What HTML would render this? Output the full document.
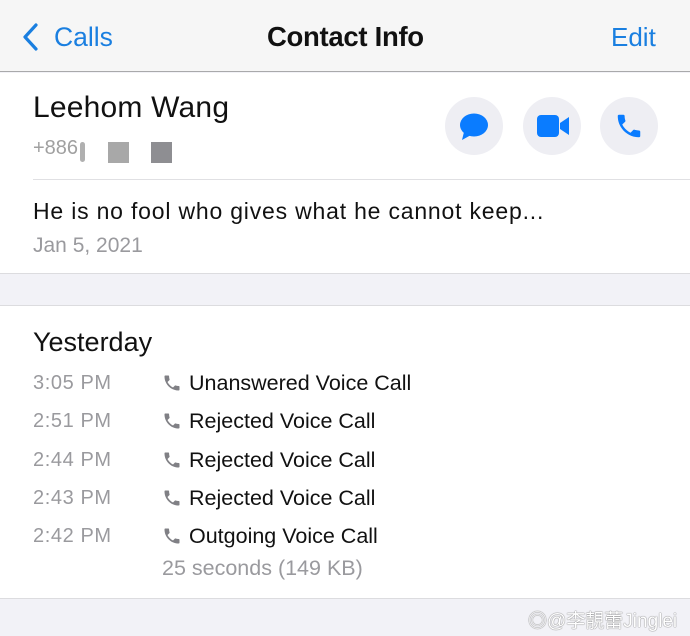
<!DOCTYPE html>
<html><head><meta charset="utf-8"><style>
*{margin:0;padding:0;box-sizing:border-box}
body{width:690px;height:636px;overflow:hidden;background:#f2f2f7;font-family:"Liberation Sans","Noto Sans CJK SC",sans-serif;position:relative}
.a{position:absolute;white-space:nowrap}
.nav{position:absolute;left:0;top:0;width:690px;height:72px;background:#f6f6f6;border-bottom:1.5px solid #a9a9ab}
.blue{color:#1a7fe0}
.w{position:absolute;left:0;width:690px;background:#fff}
.circ{position:absolute;top:97px;width:58px;height:58px;border-radius:50%;background:#eeeef3}
.t{left:33px;color:#9a9a9e;font-size:20px;letter-spacing:0.6px}
.c{left:189px;color:#111;font-size:21.5px}
.ph{left:162px}
</style></head><body>
<div class="nav"></div>
<svg class="a" style="left:20px;top:22px" width="20" height="30" viewBox="0 0 20 30"><path d="M16 3 L5 15 L16 27" fill="none" stroke="#1a7fe0" stroke-width="3.2" stroke-linecap="round" stroke-linejoin="round"/></svg>
<div class="a blue" style="left:54px;top:22px;font-size:26.5px">Calls</div>
<div class="a" style="left:267px;top:21px;font-size:27.5px;font-weight:bold;color:#111;letter-spacing:-0.3px">Contact Info</div>
<div class="a blue" style="left:611px;top:22px;font-size:26px">Edit</div>

<div class="w" style="top:73px;height:200px"></div>
<div class="a" style="left:33px;top:91px;font-size:30px;color:#111;letter-spacing:0.2px">Leehom Wang</div>
<div class="a" style="left:33px;top:137px;font-size:20px;color:#a0a0a0">+886</div>
<div class="a" style="left:80px;top:142px;width:5px;height:20px;background:#b0b0b0;border-radius:3px"></div>
<div class="a" style="left:108px;top:142px;width:21px;height:21px;background:#a8a8a8"></div>
<div class="a" style="left:151px;top:142px;width:21px;height:21px;background:#8e8e92"></div>
<div class="circ" style="left:445px"></div>
<div class="circ" style="left:523px"></div>
<div class="circ" style="left:600px"></div>
<svg class="a" style="left:458px;top:112px" width="32" height="30" viewBox="0 0 32 30"><ellipse cx="16" cy="13" rx="14" ry="11.5" fill="#0a7cff"/><path d="M6 20 L4 28 L13 23Z" fill="#0a7cff"/></svg>
<svg class="a" style="left:536px;top:114px" width="34" height="24" viewBox="0 0 34 24"><rect x="1" y="1" width="22" height="22" rx="4" fill="#0a7cff"/><path d="M24 9 L33 3 V21 L24 15Z" fill="#0a7cff"/></svg>
<svg class="a" style="left:614px;top:111px" width="30" height="30" viewBox="0 0 24 24"><path d="M6.6 10.8c1.4 2.8 3.8 5.1 6.6 6.6l2.2-2.2c.3-.3.7-.4 1-.2 1.1.4 2.3.6 3.6.6.6 0 1 .4 1 1V20c0 .6-.4 1-1 1C10.6 21 3 13.4 3 4c0-.6.4-1 1-1h3.5c.6 0 1 .4 1 1 0 1.3.2 2.5.6 3.6.1.3 0 .7-.2 1z" fill="#0a7cff"/></svg>
<div class="a" style="left:33px;top:179px;width:657px;height:1px;background:#e0e0e3"></div>
<div class="a" style="left:33px;top:198px;font-size:23px;color:#111;letter-spacing:0.8px">He is no fool who gives what he cannot keep...</div>
<div class="a" style="left:33px;top:234px;font-size:21px;color:#9a9a9e">Jan 5, 2021</div>
<div class="a" style="left:0;top:273px;width:690px;height:1px;background:#dcdcdf"></div>

<div class="w" style="top:305px;height:294px;border-top:1px solid #dcdcdf;border-bottom:1px solid #dcdcdf"></div>
<div class="a" style="left:33px;top:327px;font-size:27px;color:#111">Yesterday</div>

<div class="a t" style="top:372px">3:05 PM</div><div class="a c" style="top:371px">Unanswered Voice Call</div>
<div class="a t" style="top:410px">2:51 PM</div><div class="a c" style="top:409px">Rejected Voice Call</div>
<div class="a t" style="top:449px">2:44 PM</div><div class="a c" style="top:448px">Rejected Voice Call</div>
<div class="a t" style="top:487px">2:43 PM</div><div class="a c" style="top:486px">Rejected Voice Call</div>
<div class="a t" style="top:525px">2:42 PM</div><div class="a c" style="top:524px">Outgoing Voice Call</div>
<div class="a" style="left:162px;top:556px;font-size:21.5px;color:#9a9a9e">25 seconds (149 KB)</div>
<svg class="a ph" style="top:373px" width="20" height="20" viewBox="0 0 24 24"><path d="M6.6 10.8c1.4 2.8 3.8 5.1 6.6 6.6l2.2-2.2c.3-.3.7-.4 1-.2 1.1.4 2.3.6 3.6.6.6 0 1 .4 1 1V20c0 .6-.4 1-1 1C10.6 21 3 13.4 3 4c0-.6.4-1 1-1h3.5c.6 0 1 .4 1 1 0 1.3.2 2.5.6 3.6.1.3 0 .7-.2 1z" fill="#808085"/></svg>
<svg class="a ph" style="top:411px" width="20" height="20" viewBox="0 0 24 24"><path d="M6.6 10.8c1.4 2.8 3.8 5.1 6.6 6.6l2.2-2.2c.3-.3.7-.4 1-.2 1.1.4 2.3.6 3.6.6.6 0 1 .4 1 1V20c0 .6-.4 1-1 1C10.6 21 3 13.4 3 4c0-.6.4-1 1-1h3.5c.6 0 1 .4 1 1 0 1.3.2 2.5.6 3.6.1.3 0 .7-.2 1z" fill="#808085"/></svg>
<svg class="a ph" style="top:450px" width="20" height="20" viewBox="0 0 24 24"><path d="M6.6 10.8c1.4 2.8 3.8 5.1 6.6 6.6l2.2-2.2c.3-.3.7-.4 1-.2 1.1.4 2.3.6 3.6.6.6 0 1 .4 1 1V20c0 .6-.4 1-1 1C10.6 21 3 13.4 3 4c0-.6.4-1 1-1h3.5c.6 0 1 .4 1 1 0 1.3.2 2.5.6 3.6.1.3 0 .7-.2 1z" fill="#808085"/></svg>
<svg class="a ph" style="top:488px" width="20" height="20" viewBox="0 0 24 24"><path d="M6.6 10.8c1.4 2.8 3.8 5.1 6.6 6.6l2.2-2.2c.3-.3.7-.4 1-.2 1.1.4 2.3.6 3.6.6.6 0 1 .4 1 1V20c0 .6-.4 1-1 1C10.6 21 3 13.4 3 4c0-.6.4-1 1-1h3.5c.6 0 1 .4 1 1 0 1.3.2 2.5.6 3.6.1.3 0 .7-.2 1z" fill="#808085"/></svg>
<svg class="a ph" style="top:526px" width="20" height="20" viewBox="0 0 24 24"><path d="M6.6 10.8c1.4 2.8 3.8 5.1 6.6 6.6l2.2-2.2c.3-.3.7-.4 1-.2 1.1.4 2.3.6 3.6.6.6 0 1 .4 1 1V20c0 .6-.4 1-1 1C10.6 21 3 13.4 3 4c0-.6.4-1 1-1h3.5c.6 0 1 .4 1 1 0 1.3.2 2.5.6 3.6.1.3 0 .7-.2 1z" fill="#808085"/></svg>

<div class="a" style="left:528px;top:606px;font-size:19px;color:#fff;text-shadow:0 0 1px #777,0 0 1px #777">◎@李靚蕾Jinglei</div>
</body></html>
